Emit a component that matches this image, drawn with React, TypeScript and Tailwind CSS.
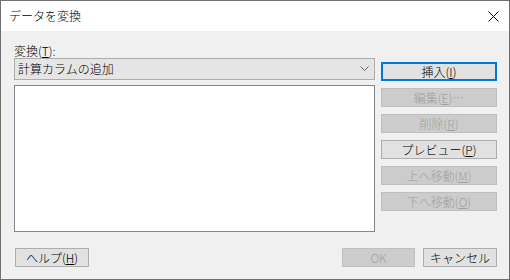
import React from "react";

const font = { fontFamily: '"Noto Sans CJK JP", "Noto Sans", sans-serif' };

function Btn({
  children,
  disabled,
  focused,
  className = "",
}: {
  children: React.ReactNode;
  disabled?: boolean;
  focused?: boolean;
  className?: string;
}) {
  const base =
    "flex items-center justify-center h-[19px] text-[12px] leading-none box-border ";
  const look = disabled
    ? "bg-[#cccccc] border border-[#bfbfbf] text-[#a0a0a0]"
    : focused
    ? "bg-[#e1e1e1] border-2 border-[#0078d7] text-black"
    : "bg-[#e1e1e1] border border-[#adadad] text-black";
  return <div className={base + look + " " + className}>{children}</div>;
}

export default function App() {
  return (
    <div
      className="w-[510px] h-[280px] border border-[#707070] flex flex-col box-border overflow-hidden font-light"
      style={font}
    >
      {/* Title bar */}
      <div className="h-[30px] bg-white flex items-center justify-between pl-[8px] pr-[10px] shrink-0">
        <span className="text-[12px] text-black leading-none">データを変換</span>
        <svg width="11" height="11" viewBox="0 0 11 11" className="block">
          <path d="M0.5 0.5 L10.5 10.5 M10.5 0.5 L0.5 10.5" stroke="#000" strokeWidth="1" />
        </svg>
      </div>

      {/* Body */}
      <div className="flex-1 bg-[#f0f0f0] flex flex-col pt-[12px]">
        <div className="flex">
          <div className="ml-[13px] w-[361px] flex flex-col">
            <div className="h-[15px] text-[12px] leading-[15px] text-black">
              変換(<span className="underline">T</span>):
            </div>
            <div className="h-[22px] bg-[#e5e5e5] border border-[#adadad] box-border flex items-center justify-between pl-[3px] pr-[5px]">
              <span className="text-[12px] leading-none text-black">計算カラムの追加</span>
              <svg width="9" height="6" viewBox="0 0 9 6" className="block">
                <path d="M0.5 0.5 L4.5 4.5 L8.5 0.5" stroke="#606060" strokeWidth="1" fill="none" />
              </svg>
            </div>
            <div className="mt-[5px] h-[147px] bg-white border border-[#828790] box-border" />
          </div>

          <div className="ml-[6px] w-[116px] flex flex-col gap-[7px] pt-[19px]">
            <Btn focused>
              挿入(<span className="underline">I</span>)
            </Btn>
            <Btn disabled>
              編集(<span className="underline">E</span>)…
            </Btn>
            <Btn disabled>
              削除(<span className="underline">R</span>)
            </Btn>
            <Btn>
              プレビュー(<span className="underline">P</span>)
            </Btn>
            <Btn disabled>
              上へ移動(<span className="underline">M</span>)
            </Btn>
            <Btn disabled>
              下へ移動(<span className="underline">O</span>)
            </Btn>
          </div>
        </div>

        <div className="flex mt-[16px]">
          <Btn className="ml-[14px] w-[74px]">
            ヘルプ(<span className="underline">H</span>)
          </Btn>
          <div className="flex-1" />
          <Btn disabled className="w-[73px]">
            OK
          </Btn>
          <Btn className="ml-[8px] w-[74px] mr-[12px]">キャンセル</Btn>
        </div>
      </div>
    </div>
  );
}
